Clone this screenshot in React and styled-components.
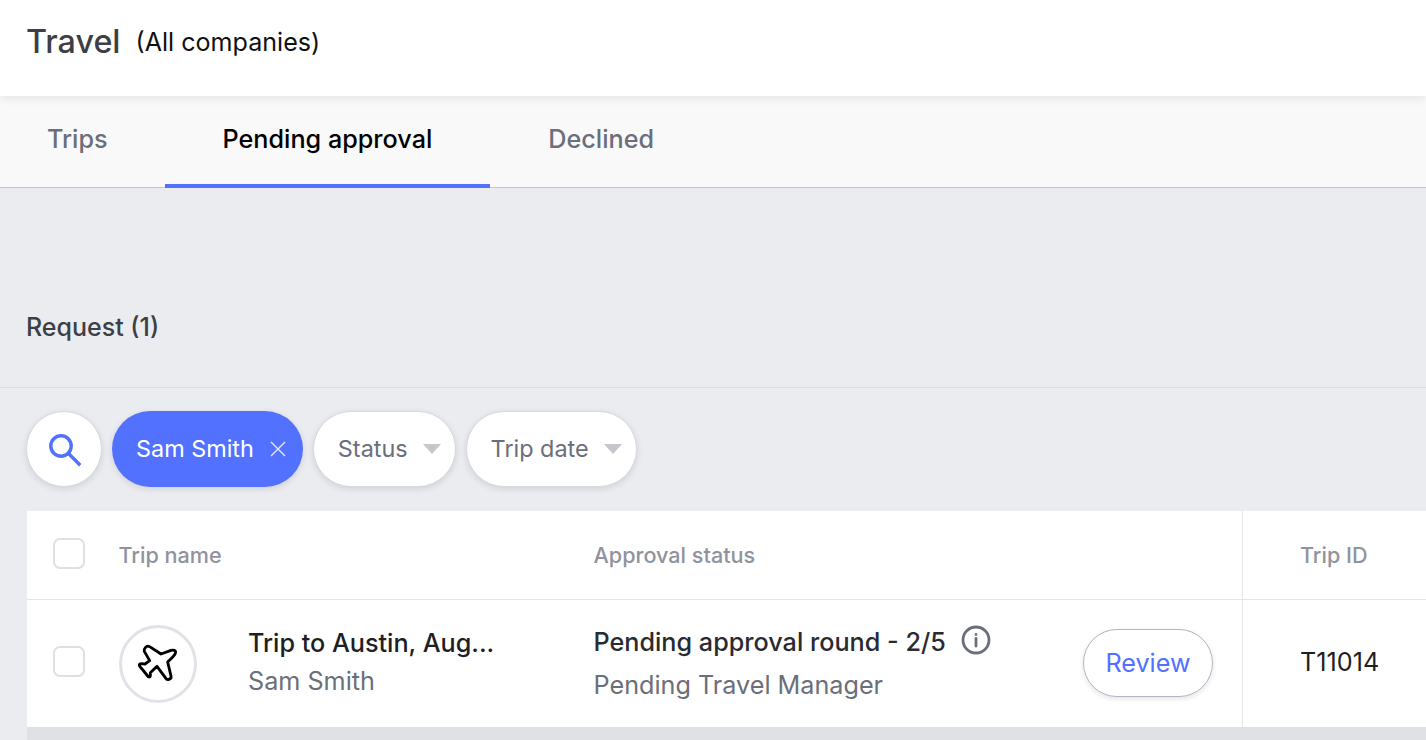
import React from "react";
import styled, { createGlobalStyle } from "styled-components";

const Global = createGlobalStyle`
  html, body { margin: 0; padding: 0; height: 100%; overflow: hidden; background: #ebecf0; }
  body { font-family: Inter, "Noto Sans", sans-serif; -webkit-font-smoothing: antialiased; }
  * { box-sizing: border-box; }
`;

const Page = styled.div`
  width: 1426px;
  height: 740px;
  overflow: hidden;
  background: #ebecf0;
  display: flex;
  flex-direction: column;
`;
const Header = styled.header`
  height: 96px;
  flex: none;
  background: #fff;
  display: flex;
  align-items: center;
  padding: 0 0 14px 26px;
  gap: 15px;
  position: relative;
  z-index: 1;
  box-shadow: 0 1px 10px rgba(30, 30, 50, 0.12);
`;
const Title = styled.h1`
  margin: 0;
  font-size: 32.3px;
  font-weight: 500;
  color: #3d3e46;
`;
const Scope = styled.span`
  font-size: 25.1px;
  font-weight: 400;
  color: #111;
  margin-top: 2px;
`;
const Tabs = styled.nav`
  height: 92px;
  flex: none;
  display: flex;
  background: #f9f9f9;
  border-bottom: 1px solid #c6c7cd;
`;
const Tab = styled.div`
  height: 92px;
  padding: 0 58px 2px;
  display: flex;
  align-items: center;
  font-size: 25.2px;
  font-weight: 500;
  color: ${p => (p.$active ? "#000" : "#6b6e7b")};
  border-bottom: 4px solid ${p => (p.$active ? "#5271ff" : "transparent")};
  &:first-child { padding-left: 47px; padding-right: 57px; }
`;
const Section = styled.div`
  height: 200px;
  flex: none;
  padding: 0 0 40px 26px;
  display: flex;
  align-items: flex-end;
  border-bottom: 1px solid #dcdde2;
`;
const SectionTitle = styled.h2`
  margin: 0;
  font-size: 25px;
  line-height: 40px;
  font-weight: 500;
  color: #3d3e46;
`;
const Filters = styled.div`
  display: flex;
  align-items: center;
  gap: 10px;
  padding: 23px 0 24px 26px;
  flex: none;
`;
const Pill = styled.div`
  height: 76px;
  border-radius: 38px;
  display: flex;
  align-items: center;
  font-size: 23.4px;
  background: ${p => (p.$on ? "#5271ff" : "#fff")};
  color: ${p => (p.$on ? "#fff" : "#6b6e7b")};
  border: ${p => (p.$on ? "none" : "1px solid #d8d9de")};
  box-shadow: 0 2px 6px rgba(30, 30, 50, 0.13);
  padding: ${p => (p.$on ? "0 17px 0 24px" : "0 14px 0 24px")};
  gap: ${p => (p.$on ? "16px" : "15px")};
`;
const PillLabel = styled.span`
  margin-bottom: 2px;
`;
const SearchPill = styled(Pill)`
  width: 76px;
  padding: 0;
  justify-content: center;
`;
const Caret = styled.span`
  width: 0;
  height: 0;
  border-left: 9px solid transparent;
  border-right: 9px solid transparent;
  border-top: 10px solid #c6c7cd;
`;
const Table = styled.div`
  margin-left: 27px;
  background: #fff;
  display: grid;
  grid-template-columns: 91.5px 475px 649.5px 1fr;
  grid-template-rows: 89px 127px;
  box-shadow: 0 3px 0 #dfe0e3, 0 3px 0 100vh #e0e1e4;
  clip-path: inset(0 0 -20px 0);
`;
const Cell = styled.div`
  display: flex;
  align-items: center;
  border-bottom: ${p => (p.$head ? "1px solid #e4e5e8" : "none")};
`;
const CheckCell = styled(Cell)`
  padding-left: 26px;
`;
const HeadText = styled.span`
  font-size: 21.6px;
  font-weight: 500;
  color: #90929e;
`;
const IdCell = styled(Cell)`
  margin-left: -1px;
  border-left: 1px solid #e4e5e8;
  padding-left: 57px;
`;
const Check = styled.span`
  width: 32px;
  height: 31px;
  margin-bottom: 4px;
  border: 2px solid #dfe0e4;
  border-radius: 7px;
  background: #fff;
`;
const NameCell = styled(Cell)`
  gap: 51px;
`;
const Avatar = styled.div`
  width: 78px;
  height: 78px;
  flex: none;
  margin-left: 0.5px;
  border-radius: 50%;
  border: 3px solid #e1e2e8;
  display: flex;
  align-items: center;
  justify-content: center;
`;
const Stack = styled.div`
  display: flex;
  flex-direction: column;
  padding-bottom: 3px;
`;
const StatusStack = styled.div`
  display: flex;
  flex-direction: column;
  gap: 3px;
`;
const Primary = styled.div`
  font-size: 25.2px;
  font-weight: 500;
  line-height: 38px;
  color: #1e1f24;
`;
const Secondary = styled.div`
  font-size: 25.2px;
  line-height: 38px;
  color: #6b6e7b;
`;
const StatusSub = styled(Secondary)`
  line-height: 40px;
`;
const StatusCell = styled(Cell)`
  justify-content: space-between;
  padding-right: 30px;
`;
const StatusLine = styled.div`
  display: flex;
  align-items: center;
  gap: 15.5px;
  font-size: 25.2px;
  font-weight: 500;
  line-height: 40px;
  color: #2a2b31;
  svg { margin-bottom: 4px; }
`;
const Review = styled.button`
  width: 130px;
  height: 68px;
  margin-bottom: 1px;
  border-radius: 34px;
  border: 1px solid #b4b5c2;
  background: #fff;
  color: #5271ff;
  font: 400 25.2px Inter, sans-serif;
  box-shadow: 0 2px 5px rgba(30, 30, 50, 0.12);
  padding: 0;
`;
const TripId = styled.span`
  font-size: 25.2px;
  margin-bottom: 3px;
  color: #1e1f24;
`;

const SearchIcon = () => (
  <svg width="36" height="36" viewBox="0 0 36 36" fill="none" stroke="#5271ff" strokeWidth="3.4">
    <circle cx="15" cy="15" r="10.2" />
    <path d="M22.5 22.5 33 33" strokeLinecap="square" />
  </svg>
);
const CloseIcon = () => (
  <svg width="16" height="16" viewBox="0 0 16 16" fill="none" stroke="#fff" strokeWidth="1.4" opacity="0.85">
    <path d="M1 1 15 15M15 1 1 15" />
  </svg>
);
const PlaneIcon = () => (
  <svg width="50" height="48" viewBox="0 0 150 144" fill="#fff" stroke="#000" strokeWidth="8.5" strokeLinejoin="round">
    <path d="M38 22 C41 18 46 18 50 20 L84 42 L114 31 C122 29 128 31 128 37 C128 42 124 46 120 50 L104 66 L114 108 C115 113 112 117 108 118 C103 120 100 118 97 113 L72 79 L52 98 L52 108 C52 112 46 112 44 108 L32 93 L21 80 C17 75 19 71 24 71 L36 72 L50 62 L34 34 C33 29 35 25 38 22 Z" />
  </svg>
);
const InfoIcon = () => (
  <svg width="30" height="30" viewBox="0 0 30 30" fill="none" stroke="#6b6e7b" strokeWidth="2.8">
    <circle cx="15" cy="15" r="13" />
    <path d="M15 13.5V21" strokeLinecap="round" />
    <circle cx="15" cy="9.5" r="0.6" fill="#6b6e7b" strokeWidth="1.6" />
  </svg>
);

export default function App() {
  return (
    <Page>
      <Global />
      <Header>
        <Title>Travel</Title>
        <Scope>(All companies)</Scope>
      </Header>
      <Tabs>
        <Tab>Trips</Tab>
        <Tab $active>Pending approval</Tab>
        <Tab>Declined</Tab>
      </Tabs>
      <Section>
        <SectionTitle>Request (1)</SectionTitle>
      </Section>
      <Filters>
        <SearchPill><SearchIcon /></SearchPill>
        <Pill $on><PillLabel>Sam Smith</PillLabel><CloseIcon /></Pill>
        <Pill><PillLabel>Status</PillLabel><Caret /></Pill>
        <Pill><PillLabel>Trip date</PillLabel><Caret /></Pill>
      </Filters>
      <Table>
        <CheckCell $head><Check /></CheckCell>
        <Cell $head><HeadText>Trip name</HeadText></Cell>
        <Cell $head><HeadText>Approval status</HeadText></Cell>
        <IdCell $head><HeadText>Trip ID</HeadText></IdCell>
        <CheckCell><Check /></CheckCell>
        <NameCell>
          <Avatar><PlaneIcon /></Avatar>
          <Stack>
            <Primary>Trip to Austin, Aug...</Primary>
            <Secondary>Sam Smith</Secondary>
          </Stack>
        </NameCell>
        <StatusCell>
          <StatusStack>
            <StatusLine>Pending approval round - 2/5 <InfoIcon /></StatusLine>
            <StatusSub>Pending Travel Manager</StatusSub>
          </StatusStack>
          <Review>Review</Review>
        </StatusCell>
        <IdCell><TripId>T11014</TripId></IdCell>
      </Table>
    </Page>
  );
}
